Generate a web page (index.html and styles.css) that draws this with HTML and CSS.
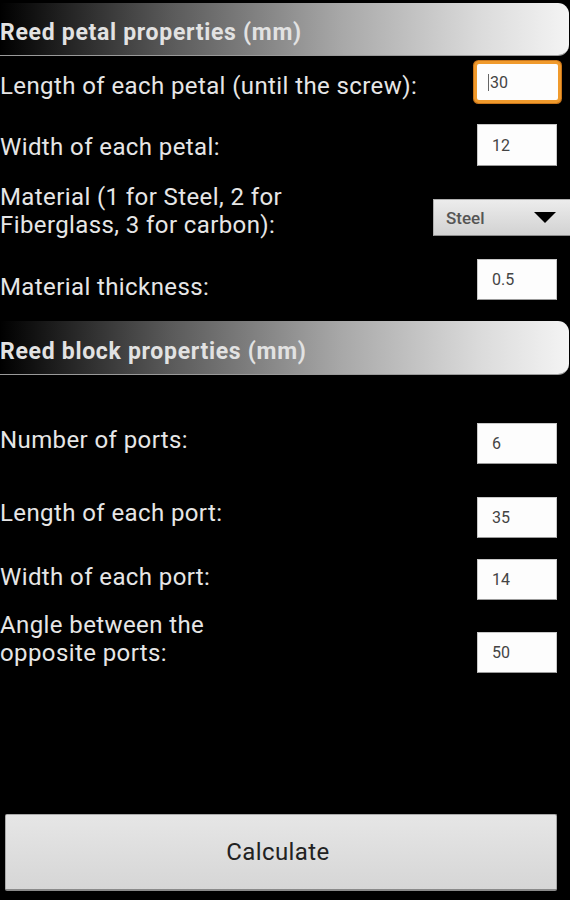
FILE: index.html
```html
<!DOCTYPE html>
<html>
<head>
<meta charset="utf-8">
<link rel="stylesheet" href="styles.css">
</head>
<body>
<div class="screen">
  <div class="section-head head-1">Reed petal properties (mm)</div>

  <div class="row row-1">
    <div class="label lab-1">Length of each petal (until the screw):</div>
    <div class="field focused"><span class="cursor"></span>30</div>
  </div>

  <div class="row row-2">
    <div class="label lab-2">Width of each petal:</div>
    <div class="field field-2">12</div>
  </div>

  <div class="row row-3">
    <div class="label">Material (1 for Steel, 2 for<br>Fiberglass, 3 for carbon):</div>
    <div class="spinner">
      <span class="spinner-text">Steel</span>
      <svg class="spinner-arrow" width="22" height="11" viewBox="0 0 22 11"><polygon points="0,0 22,0 11,11" fill="#000"/></svg>
    </div>
  </div>

  <div class="row row-4">
    <div class="label lab-4">Material thickness:</div>
    <div class="field">0.5</div>
  </div>

  <div class="section-head head-2">Reed block properties (mm)</div>

  <div class="row row-5">
    <div class="label lab-5">Number of ports:</div>
    <div class="field">6</div>
  </div>

  <div class="row row-6">
    <div class="label lab-6">Length of each port:</div>
    <div class="field">35</div>
  </div>

  <div class="row row-7">
    <div class="label lab-7">Width of each port:</div>
    <div class="field">14</div>
  </div>

  <div class="row row-8">
    <div class="label">Angle between the<br>opposite ports:</div>
    <div class="field field-8">50</div>
  </div>

  <div class="calc-btn">Calculate</div>
</div>
</body>
</html>
```

FILE: styles.css
```css
html, body {
  margin: 0;
  padding: 0;
  background: #000;
}

.screen {
  height: 900px;
  display: flex;
  flex-direction: column;
  font-family: Roboto, "Noto Sans", sans-serif;
  color: #e6e6e6;
  overflow: hidden;
}

.section-head {
  height: 53px;
  box-sizing: border-box;
  padding-top: 7px;
  display: flex;
  align-items: center;
  width: 569px;
  border-radius: 0 11px 11px 0;
  background: linear-gradient(to right, #000 0%, #5a5a5a 30%, #a8a8a8 60%, #dcdcdc 85%, #f4f4f4 100%);
  border-bottom: 1px solid #9a9a9a;
  font-weight: bold;
  font-size: 23px;
  color: #e2e2e2;
  letter-spacing: 0.7px;
  white-space: nowrap;
}

.head-1 { margin-top: 3px; }
.head-2 { margin-top: 20px; height: 54px; }

.row {
  display: flex;
  justify-content: space-between;
  align-items: flex-start;
}

.label {
  font-size: 24px;
  line-height: 28px;
  letter-spacing: 0.4px;
  white-space: nowrap;
}

.field {
  width: 80px;
  height: 41px;
  margin-right: 13px;
  box-sizing: border-box;
  background: #fdfdfd;
  border: 1px solid #c8c8c8;
  border-bottom-color: #9a9a9a;
  display: flex;
  align-items: center;
  padding-left: 14px;
  font-size: 16px;
  color: #444;
}

.focused {
  margin-top: 5px;
  height: 36px;
  margin-right: 12px;
  width: 81px;
  border: none;
  border-radius: 2px;
  box-shadow: 0 0 0 3px #f09a2c, 0 0 0 4px #c9751a;
  padding-left: 11px;
}

.cursor {
  display: inline-block;
  width: 1px;
  height: 17px;
  background: #666;
  margin-right: 1px;
}

.row-1 { margin-top: 3px; }
.lab-1 { margin-top: 13px; }

.row-2 { margin-top: 24px; }
.lab-2 { margin-top: 9px; }
.field-2 { height: 42px; }

.row-3 { margin-top: 17px; }
.spinner {
  margin-top: 16px;
  width: 140px;
  height: 37px;
  margin-right: -3px;
  box-sizing: border-box;
  background: linear-gradient(to bottom, #ececec, #d2d2d2);
  border: 1px solid #b0b0b0;
  border-bottom-color: #8c8c8c;
  display: flex;
  align-items: center;
  justify-content: space-between;
  padding-left: 12px;
  padding-right: 16px;
}
.spinner-text {
  font-size: 17px;
  font-weight: 500;
  color: #555;
}
.spinner-arrow { display: block; }

.row-4 { margin-top: 20px; }
.lab-4 { margin-top: 14px; }

.row-5 { margin-top: 48px; }
.lab-5 { margin-top: 3px; }

.row-6 { margin-top: 33px; }
.lab-6 { margin-top: 2px; }

.row-7 { margin-top: 21px; }
.lab-7 { margin-top: 4px; }

.row-8 { margin-top: 11px; }
.field-8 { margin-top: 21px; }

.calc-btn {
  margin-top: auto;
  margin-bottom: 9px;
  margin-left: 5px;
  width: 552px;
  height: 77px;
  box-sizing: border-box;
  background: linear-gradient(to bottom, #e6e6e6, #d6d6d6);
  border: 1px solid #a8a8a8;
  border-bottom: 2px solid #8a8a8a;
  border-radius: 2px;
  display: flex;
  align-items: center;
  justify-content: center;
  padding-right: 6px;
  font-size: 24px;
  letter-spacing: 0.4px;
  color: #222;
  font-family: Roboto, "Noto Sans", sans-serif;
}
```
